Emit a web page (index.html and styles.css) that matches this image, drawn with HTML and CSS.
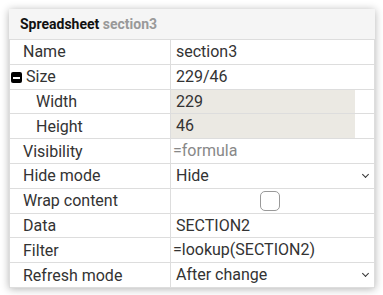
FILE: index.html
```html
<!DOCTYPE html>
<html lang="en">
<head>
  <meta charset="UTF-8" />
  <title>Spreadsheet properties</title>
  <link rel="stylesheet" href="styles.css">
</head>
<body>

  <div class="panel">
    <div class="panel-title">Spreadsheet <span class="sub">section3</span></div>

    <table class="props">
      <colgroup>
        <col class="key-col">
        <col class="val-col">
      </colgroup>
      <tr>
        <td class="key">Name</td>
        <td class="val"><span class="text">section3</span></td>
      </tr>
      <tr>
        <td class="key group"><span class="toggle"></span>Size</td>
        <td class="val"><span class="text">229/46</span></td>
      </tr>
      <tr>
        <td class="key child">Width</td>
        <td class="val"><span class="text filled">229</span></td>
      </tr>
      <tr>
        <td class="key child">Height</td>
        <td class="val"><span class="text filled">46</span></td>
      </tr>
      <tr>
        <td class="key">Visibility</td>
        <td class="val"><span class="formula placeholder">=formula</span></td>
      </tr>
      <tr>
        <td class="key">Hide mode</td>
        <td class="val"><div class="select"><span class="text">Hide</span><span class="chev"></span></div></td>
      </tr>
      <tr>
        <td class="key">Wrap content</td>
        <td class="val center"><span class="check"></span></td>
      </tr>
      <tr>
        <td class="key">Data</td>
        <td class="val"><span class="text">SECTION2</span></td>
      </tr>
      <tr>
        <td class="key">Filter</td>
        <td class="val"><span class="formula">=lookup(SECTION2)</span></td>
      </tr>
      <tr>
        <td class="key">Refresh mode</td>
        <td class="val"><div class="select"><span class="text">After change</span><span class="chev"></span></div></td>
      </tr>
    </table>
  </div>

</body>
</html>
```

FILE: styles.css
```css
html, body {
  margin: 0;
  padding: 0;
  background: #fff;
  font-family: Roboto, 'Noto Sans', sans-serif;
  color: #333;
}

.panel {
  margin: 9px;
  width: 366px;
  background: #fff;
  box-shadow: 0 1px 8px rgba(0, 0, 0, 0.3);
}

.panel-title {
  height: 30px;
  line-height: 30px;
  padding-left: 11px;
  background: #f5f5f5;
  font-size: 14px;
  font-weight: bold;
  color: #111;
}

.panel-title .sub {
  color: #999;
}

.props {
  width: 365px;
  table-layout: fixed;
  border-collapse: collapse;
  font-size: 16px;
}

.key-col {
  width: 161px;
}

.val-col {
  width: 204px;
}

.props td {
  height: 23.8px;
  padding: 0;
  border: 1px solid #ddd;
  vertical-align: middle;
}

.props .key {
  padding-left: 13px;
  white-space: nowrap;
}

.props .key.group {
  padding-left: 1px;
}

.props .key.child {
  padding-left: 26px;
}

.toggle {
  display: inline-block;
  position: relative;
  width: 11px;
  height: 11px;
  margin-right: 4px;
  vertical-align: -1px;
  background: #000;
  border-radius: 2px;
}

.toggle::after {
  content: '';
  position: absolute;
  left: 2px;
  right: 2px;
  top: 5px;
  height: 2px;
  background: #fff;
}

.val .text {
  display: block;
  padding-left: 5px;
  line-height: 23.8px;
}

.val .text.filled {
  width: 179px;
  background: #ebe9e3;
}

.val .formula {
  display: block;
  padding-left: 2px;
  line-height: 23.8px;
}

.placeholder {
  color: #888;
}

.select {
  display: flex;
  align-items: center;
  justify-content: space-between;
  padding-right: 4px;
}

.chev {
  width: 4px;
  height: 4px;
  margin-right: 2px;
  margin-top: -3px;
  border-right: 1.5px solid #333;
  border-bottom: 1.5px solid #333;
  transform: rotate(45deg);
}

.val.center {
  text-align: center;
}

.check {
  display: inline-block;
  width: 18px;
  height: 18px;
  margin-right: 6px;
  vertical-align: middle;
  border: 1px solid #999;
  border-radius: 5px;
  background: #fff;
}
```
